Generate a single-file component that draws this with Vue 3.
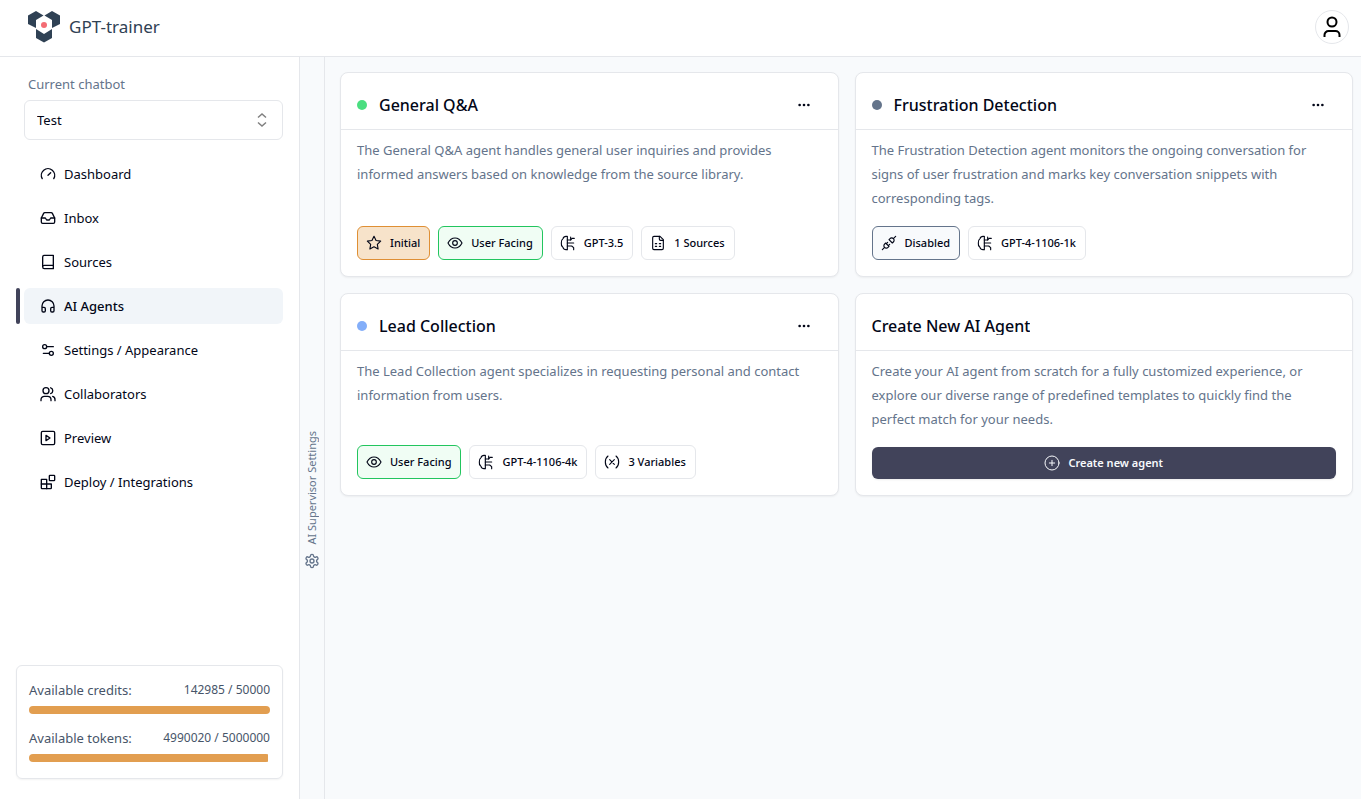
<script setup>
import { ref } from 'vue'

const icons = {
  gauge: '<path d="m12 14 4-4"/><path d="M3.34 19a10 10 0 1 1 17.32 0"/>',
  inbox: '<path d="M22 12h-6l-2 3h-4l-2-3H2"/><path d="M5.45 5.11 2 12v6a2 2 0 0 0 2 2h16a2 2 0 0 0 2-2v-6l-3.45-6.89A2 2 0 0 0 16.76 4H7.24a2 2 0 0 0-1.79 1.11z"/>',
  book: '<path d="M4 19.5v-15A2.5 2.5 0 0 1 6.5 2H20v20H6.5a2.5 2.5 0 0 1 0-5H20"/>',
  headphones: '<path d="M3 14h3a2 2 0 0 1 2 2v3a2 2 0 0 1-2 2H5a2 2 0 0 1-2-2v-7a9 9 0 0 1 18 0v7a2 2 0 0 1-2 2h-1a2 2 0 0 1-2-2v-3a2 2 0 0 1 2-2h3"/>',
  sliders: '<path d="M20 7h-9"/><path d="M14 17H5"/><circle cx="17" cy="17" r="3"/><circle cx="7" cy="7" r="3"/>',
  users: '<circle cx="9" cy="7" r="4.5"/><path d="M1.5 22v-1.500a5 5 0 0 1 5-5h5a5 5 0 0 1 5 5V22"/><path d="M16 2.700a4.500 4.500 0 0 1 0 8.600"/><path d="M19 15.500a5 5 0 0 1 3.500 5V22"/>',
  play: '<rect x="2" y="2" width="20" height="20" rx="2"/><path d="m9 8 6 4-6 4Z"/>',
  blocks: '<rect x="14" y="2" width="8" height="8" rx="1"/><path d="M2 8h8v14H3a1 1 0 0 1-1-1Z"/><path d="M2 15h15v6a1 1 0 0 1-1 1h-6"/>',
  star: '<path d="m12 17.75-6.17 3.25 1.18-6.87-5-4.87 6.9-1L12 2l3.09 6.25 6.9 1-5 4.87L18.17 21z"/>',
  eye: '<path d="M1.5 12s3.8-7.5 10.5-7.5S22.5 12 22.5 12s-3.8 7.5-10.5 7.5S1.5 12 1.5 12Z"/><circle cx="12" cy="12" r="3.5"/>',
  brain: '<path d="M10 2H9C6.500 2 5 3.500 4.500 5.500 2.500 7 1.500 9 2 12c-.5 3 .5 5 2.500 6.500C5 20.500 6.500 22 9 22h1"/><path d="M11 2v20"/><path d="M11 7.500h5l2-2.500h3.500"/><path d="M16 7.500V3"/><path d="M11 12h9.500"/><path d="M11 16.500h6.500l3 2.500v3"/>',
  sheet: '<path d="M15 2H6a2 2 0 0 0-2 2v16a2 2 0 0 0 2 2h12a2 2 0 0 0 2-2V7Z"/><path d="M14 2v4a2 2 0 0 0 2 2h4"/><path d="M8 13h2M14 13h2M8 17h2M14 17h2"/>',
  plug: '<path d="m7 12 5 5-1.500 1.500a3.540 3.540 0 1 1-5-5z"/><path d="m17 12-5-5 1.500-1.500a3.540 3.540 0 1 1 5 5z"/><path d="m2 22 3.500-3.500M18.500 5.500 22 2M10 11l-2 2M13 14l-2 2"/>',
  variable: '<path d="M6 21s-4-3-4-9 4-9 4-9"/><path d="M18 3s4 3 4 9-4 9-4 9"/><path d="m15.500 8.500-7 7M8.500 8.500l7 7"/>',
  plus: '<circle cx="12" cy="12" r="10.500"/><path d="M8 12h8M12 8v8"/>',
  gear: '<path d="M12.22 2h-.44a2 2 0 0 0-2 2v.18a2 2 0 0 1-1 1.73l-.43.25a2 2 0 0 1-2 0l-.15-.08a2 2 0 0 0-2.73.73l-.22.38a2 2 0 0 0 .73 2.73l.15.1a2 2 0 0 1 1 1.72v.51a2 2 0 0 1-1 1.74l-.15.09a2 2 0 0 0-.73 2.73l.22.38a2 2 0 0 0 2.73.73l.15-.08a2 2 0 0 1 2 0l.43.25a2 2 0 0 1 1 1.73V20a2 2 0 0 0 2 2h.44a2 2 0 0 0 2-2v-.18a2 2 0 0 1 1-1.73l.43-.25a2 2 0 0 1 2 0l.15.08a2 2 0 0 0 2.73-.73l.22-.39a2 2 0 0 0-.73-2.73l-.15-.08a2 2 0 0 1-1-1.74v-.5a2 2 0 0 1 1-1.74l.15-.09a2 2 0 0 0 .73-2.73l-.22-.38a2 2 0 0 0-2.73-.73l-.15.08a2 2 0 0 1-2 0l-.43-.25a2 2 0 0 1-1-1.73V4a2 2 0 0 0-2-2z"/><circle cx="12" cy="12" r="3"/>',
}

const bots = ['Test']
const currentBot = ref('Test')

const nav = [
  { label: 'Dashboard', icon: 'gauge' },
  { label: 'Inbox', icon: 'inbox' },
  { label: 'Sources', icon: 'book' },
  { label: 'AI Agents', icon: 'headphones', active: true },
  { label: 'Settings / Appearance', icon: 'sliders' },
  { label: 'Collaborators', icon: 'users' },
  { label: 'Preview', icon: 'play' },
  { label: 'Deploy / Integrations', icon: 'blocks' },
]

const usage = [
  { label: 'Available credits:', left: 142985, total: 50000 },
  { label: 'Available tokens:', left: 4990020, total: 5000000 },
]
const percent = (u) => Math.min(100, Math.floor((u.left / u.total) * 100))

const agents = [
  {
    name: 'General Q&A',
    tone: 'green',
    text: 'The General Q&A agent handles general user inquiries and provides informed answers based on knowledge from the source library.',
    tags: [
      { label: 'Initial', icon: 'star', kind: 'initial' },
      { label: 'User Facing', icon: 'eye', kind: 'facing' },
      { label: 'GPT-3.5', icon: 'brain' },
      { label: '1 Sources', icon: 'sheet' },
    ],
  },
  {
    name: 'Frustration Detection',
    tone: 'slate',
    text: 'The Frustration Detection agent monitors the ongoing conversation for signs of user frustration and marks key conversation snippets with corresponding tags.',
    tags: [
      { label: 'Disabled', icon: 'plug', kind: 'disabled' },
      { label: 'GPT-4-1106-1k', icon: 'brain' },
    ],
  },
  {
    name: 'Lead Collection',
    tone: 'blue',
    text: 'The Lead Collection agent specializes in requesting personal and contact information from users.',
    tags: [
      { label: 'User Facing', icon: 'eye', kind: 'facing' },
      { label: 'GPT-4-1106-4k', icon: 'brain' },
      { label: '3 Variables', icon: 'variable' },
    ],
  },
]
</script>

<template>
  <div class="app">
    <header class="topbar">
      <a class="brand" href="#">
        <svg class="logo" viewBox="0 0 32 32" aria-hidden="true">
          <path fill="#2f4154" d="M8 0 15.500 4.500 8 9v8L0 13V4.500ZM24 0l8 4.500V13l-8 4V9l-7.500-4.500ZM8 18l8 5 8-5v9l-8 4.500L8 27Z" />
          <circle cx="16" cy="14" r="3" fill="#f36c74" />
        </svg>
        <span>GPT-trainer</span>
      </a>
      <button class="avatar" type="button" aria-label="Account">
        <svg class="avatar-icon" viewBox="0 0 24 24" aria-hidden="true">
          <circle cx="12" cy="7" r="4.500" />
          <path d="M4.500 22v-2a4 4 0 0 1 4-4h7a4 4 0 0 1 4 4v2" />
        </svg>
      </button>
    </header>

    <div class="body">
      <aside class="sidebar">
        <label class="bot-label" for="bot">Current chatbot</label>
        <div class="bot-select">
          <select id="bot" v-model="currentBot">
            <option v-for="b in bots" :key="b">{{ b }}</option>
          </select>
          <svg class="chevrons" viewBox="0 0 16 16" aria-hidden="true">
            <path d="m4 5.500 4-3.500 4 3.500M4 10.500 8 14l4-3.500" />
          </svg>
        </div>

        <nav class="nav">
          <a v-for="n in nav" :key="n.label" href="#" class="nav-item" :class="{ active: n.active }">
            <svg class="icon" viewBox="0 0 24 24" aria-hidden="true" v-html="icons[n.icon]"></svg>
            <span>{{ n.label }}</span>
          </a>
        </nav>

        <section class="usage">
          <div v-for="u in usage" :key="u.label" class="usage-item">
            <div class="usage-row">
              <span>{{ u.label }}</span>
              <span class="usage-count">{{ u.left }} / {{ u.total }}</span>
            </div>
            <div class="track" role="progressbar" :aria-label="u.label" :aria-valuenow="percent(u)">
              <div class="fill" :style="{ width: percent(u) + '%' }"></div>
            </div>
          </div>
        </section>
      </aside>

      <button class="supervisor" type="button">
        <span>AI Supervisor Settings</span>
        <svg class="icon" viewBox="0 0 24 24" aria-hidden="true" v-html="icons.gear"></svg>
      </button>

      <main class="grid">
        <article v-for="a in agents" :key="a.name" class="card">
          <div class="card-head">
            <span class="dot" :class="a.tone"></span>
            <h2>{{ a.name }}</h2>
            <button class="more" type="button" :aria-label="'Options for ' + a.name">
              <svg viewBox="0 0 16 16" aria-hidden="true">
                <circle cx="3" cy="8" r="1.500" /><circle cx="8" cy="8" r="1.500" /><circle cx="13" cy="8" r="1.500" />
              </svg>
            </button>
          </div>
          <div class="card-body">
            <p>{{ a.text }}</p>
            <ul class="tags">
              <li v-for="t in a.tags" :key="t.label" class="tag" :class="t.kind">
                <svg class="icon" viewBox="0 0 24 24" aria-hidden="true" v-html="icons[t.icon]"></svg>
                <span>{{ t.label }}</span>
              </li>
            </ul>
          </div>
        </article>

        <article class="card">
          <div class="card-head">
            <h2 class="tight">Create New AI Agent</h2>
          </div>
          <div class="card-body">
            <p>Create your AI agent from scratch for a fully customized experience, or explore our diverse range of predefined templates to quickly find the perfect match for your needs.</p>
            <button class="create" type="button">
              <svg class="icon" viewBox="0 0 24 24" aria-hidden="true" v-html="icons.plus"></svg>
              <span>Create new agent</span>
            </button>
          </div>
        </article>
      </main>
    </div>
  </div>
</template>

<style>
body {
  margin: 0;
  background: #f8fafc;
}
</style>

<style scoped>
.app {
  box-sizing: border-box;
  display: flex;
  flex-direction: column;
  min-height: 100vh;
  font-family: "Noto Sans", "Open Sans", sans-serif;
  font-size: 13px;
  line-height: 20px;
  color: #020617;
}
.app *,
.app *::before {
  box-sizing: border-box;
}
button,
select {
  font: inherit;
  color: inherit;
  margin: 0;
  cursor: pointer;
}
a {
  color: inherit;
  text-decoration: none;
}
.icon {
  width: 16px;
  height: 16px;
  flex: none;
  fill: none;
  stroke: currentColor;
  stroke-width: 2;
  stroke-linecap: round;
  stroke-linejoin: round;
}

.topbar {
  display: flex;
  align-items: center;
  justify-content: space-between;
  height: 57px;
  padding: 0 12px 2px 28px;
  background: #fff;
  border-bottom: 1px solid #e5e7eb;
}
.brand {
  display: flex;
  align-items: center;
  gap: 9px;
  font-size: 17px;
  color: #2f4154;
}
.logo {
  width: 32px;
  height: 32px;
}
.avatar {
  display: flex;
  align-items: center;
  justify-content: center;
  width: 34px;
  height: 34px;
  padding: 0;
  background: #fff;
  border: 1px solid #e5e7eb;
  border-radius: 50%;
}
.avatar-icon {
  width: 24px;
  height: 24px;
  flex: none;
  fill: none;
  stroke: #000;
  stroke-width: 2;
}

.body {
  display: flex;
  flex: 1;
}
.sidebar {
  display: flex;
  flex-direction: column;
  flex: none;
  width: 300px;
  padding: 17px 16px 20px;
  background: #fff;
  border-right: 1px solid #e5e7eb;
}
.bot-label {
  padding-left: 12px;
  color: #64748b;
}
.bot-select {
  position: relative;
  margin: 6px 0 0 8px;
}
.bot-select select {
  display: block;
  width: 100%;
  height: 40px;
  padding: 0 12px;
  appearance: none;
  background: #fff;
  border: 1px solid #e5e7eb;
  border-radius: 6px;
}
.chevrons {
  position: absolute;
  top: 12px;
  right: 13px;
  width: 16px;
  height: 16px;
  fill: none;
  stroke: #808080;
  stroke-width: 1.5;
  pointer-events: none;
}
.nav {
  display: flex;
  flex-direction: column;
  gap: 8px;
  margin: 16px 0 0 8px;
}
.nav-item {
  position: relative;
  display: flex;
  align-items: center;
  gap: 8px;
  height: 36px;
  padding: 0 16px;
  border-radius: 6px;
}
.nav-item.active {
  background: #f1f5f9;
  font-weight: 500;
}
.nav-item.active::before {
  content: "";
  position: absolute;
  top: 0;
  bottom: 0;
  left: -8px;
  width: 4px;
  background: #41435a;
  border-radius: 2px;
}
.usage {
  display: flex;
  flex-direction: column;
  gap: 12px;
  margin-top: auto;
  padding: 12px 12px 16px;
  color: #475569;
  border: 1px solid #e5e7eb;
  border-radius: 6px;
  box-shadow: 0 1px 2px rgb(0 0 0 / 5%);
}
.usage-row {
  display: flex;
  align-items: center;
  justify-content: space-between;
  height: 24px;
}
.usage-count {
  font-size: 12px;
}
.track {
  height: 8px;
  margin-top: 4px;
  overflow: hidden;
  border-radius: 4px;
}
.fill {
  height: 100%;
  background: #e29e50;
}

.supervisor {
  display: flex;
  flex-direction: column;
  align-items: center;
  justify-content: center;
  gap: 8px;
  flex: none;
  width: 25px;
  padding: 144px 0 0;
  font-size: 11px;
  color: #64748b;
  background: #f8fafc;
  border: 0;
  border-right: 1px solid #e5e7eb;
}
.supervisor span {
  writing-mode: vertical-rl;
  transform: rotate(180deg);
}

.grid {
  display: grid;
  grid-template-columns: 1fr 1fr;
  align-content: start;
  gap: 16px;
  flex: 1;
  min-width: 0;
  padding: 15px 8px 16px 15px;
}
.card {
  display: flex;
  flex-direction: column;
  background: #fff;
  border: 1px solid #e5e7eb;
  border-radius: 8px;
  box-shadow: 0 1px 2px rgb(0 0 0 / 5%);
}
.card-head {
  display: flex;
  align-items: center;
  height: 57px;
  padding: 8px 16px 0;
  border-bottom: 1px solid #e5e7eb;
}
.card-head h2 {
  margin: 0;
  font-size: 16px;
  font-weight: 500;
  line-height: 24px;
}
.card-head .tight {
  overflow: hidden;
  line-height: 18px;
}
.dot {
  width: 10px;
  height: 10px;
  margin-right: 12px;
  border-radius: 50%;
}
.green {
  background: #4ade80;
}
.slate {
  background: #64748b;
}
.blue {
  background: #83aef9;
}
.more {
  display: flex;
  align-items: center;
  justify-content: center;
  width: 36px;
  height: 32px;
  margin-left: auto;
  padding: 0;
  background: none;
  border: 0;
}
.more svg {
  width: 14px;
  height: 14px;
  fill: #020617;
}
.card-body {
  display: flex;
  flex: 1;
  flex-direction: column;
  padding: 8px 16px 16px;
}
.card-body p {
  margin: 0;
  line-height: 24px;
  color: #64748b;
}
.tags {
  display: flex;
  flex-wrap: wrap;
  gap: 8px;
  margin: auto 0 0;
  padding: 16px 0 0;
  list-style: none;
}
.tag {
  display: flex;
  align-items: center;
  gap: 8px;
  height: 34px;
  padding: 0 9px 0 8px;
  font-size: 11px;
  font-weight: 500;
  border: 1px solid #e5e7eb;
  border-radius: 6px;
}
.tag .icon {
  stroke-width: 1.7;
}
.initial {
  background: #f7e3ca;
  border-color: #df8f34;
}
.facing {
  background: #f0fdf4;
  border-color: #22c55e;
}
.disabled {
  background: #f8fafc;
  border-color: #64748b;
}
.create {
  display: flex;
  align-items: center;
  justify-content: center;
  gap: 8px;
  height: 32px;
  margin-top: 16px;
  padding: 0;
  font-size: 11px;
  font-weight: 600;
  color: #f8fafc;
  background: #41435a;
  border: 0;
  border-radius: 6px;
  box-shadow: 0 1px 2px rgb(0 0 0 / 8%);
}
.create .icon {
  stroke-width: 1.5;
}
</style>
